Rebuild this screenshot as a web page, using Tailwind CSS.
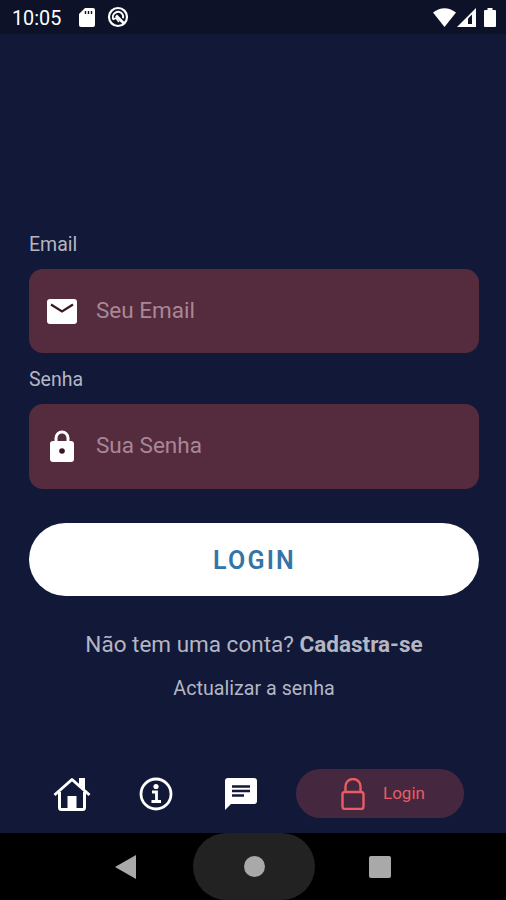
<!DOCTYPE html>
<html lang="pt">
<head>
    <meta charset="UTF-8">
    <meta name="viewport" content="width=device-width, initial-scale=1.0">
    <title>Login</title>
    <script src="https://cdn.jsdelivr.net/npm/@tailwindcss/browser@4"></script>
</head>
<body class="h-[900px] flex flex-col overflow-hidden bg-[#121837] font-[Roboto,sans-serif] text-[#b4b6c4]">

    <!-- Status bar -->
    <header class="h-[34px] shrink-0 flex items-center bg-[#0d1228] pl-3 pr-[10px] text-white">
        <span class="text-[19.8px] leading-none pt-[3px] w-[67px]">10:05</span>
        <svg class="w-4 h-[19px]" viewBox="0 0 16 19" fill="#fff">
            <path d="M6 0h8a2 2 0 0 1 2 2v15a2 2 0 0 1-2 2H2a2 2 0 0 1-2-2V6z"/>
            <path d="M6.500 3v3M9.500 3v3M12.500 3v3" stroke="#0d1228" stroke-width="1.4"/>
        </svg>
        <svg class="w-[22px] h-[22px] ml-3" viewBox="0 0 22 22" fill="none" stroke="#fff">
            <circle cx="11" cy="11" r="9" stroke-width="2.200"/>
            <path d="M6.500 13.500a5.200 5.200 0 0 1 9-5.200 5.200 5.200 0 0 1 .5 4" stroke-width="2"/>
            <path d="M9 9.500l8 8" stroke-width="2.600"/>
            <path d="M6 13.500l3-1.500 3 4" stroke-width="1.500"/>
        </svg>
        <svg class="w-[23px] h-[19px] ml-auto" viewBox="0 0 23 19" fill="#fff">
            <path d="M0 4.500Q11.500-4 23 4.500L11.500 19z"/>
        </svg>
        <svg class="w-[19px] h-[19px] ml-px" viewBox="0 0 19 19">
            <path d="M19 0v19H0z" fill="#fff"/>
            <path d="M11 10.500L15 6.500V16h-4z" fill="#0d1228"/>
        </svg>
        <svg class="w-3 h-[19px] ml-2" viewBox="0 0 12 19" fill="#fff">
            <path d="M3.500 0h5v2H11a1 1 0 0 1 1 1v15a1 1 0 0 1-1 1H1a1 1 0 0 1-1-1V3a1 1 0 0 1 1-1h2.500z"/>
        </svg>
    </header>

    <!-- Login form -->
    <main class="flex-1 flex flex-col pt-[197px] pl-[29px] pr-[27px]">
        <label class="h-7 leading-7 text-[19.5px]">Email</label>
        <div class="h-[84px] mt-[10px] flex items-center rounded-[14px] bg-[#552c3d] pl-[18px] text-[22.5px] text-[#a98796]">
            <svg class="w-[30px] h-[25px] mr-[19px]" viewBox="0 0 30 25">
                <rect width="30" height="25" rx="3" fill="#fff"/>
                <path d="M4 5.500l11 7 11-7" fill="none" stroke="#3a1524" stroke-width="2.200"/>
            </svg>
            <span>Seu Email</span>
        </div>

        <label class="h-7 mt-[13px] leading-7 text-[19.5px]">Senha</label>
        <div class="h-[85px] mt-[10px] flex items-center rounded-[14px] bg-[#552c3d] pl-5 text-[22.5px] text-[#a98796]">
            <svg class="w-[26px] h-8 mr-[21px] mb-[2px]" viewBox="0 0 26 32">
                <path d="M7 13V8a6 6 0 0 1 12 0v5" fill="none" stroke="#fff" stroke-width="3"/>
                <rect x="1" y="11" width="24" height="21" rx="3" fill="#fff"/>
                <circle cx="13" cy="21" r="2.800" fill="#3a1524"/>
            </svg>
            <span class="mb-px">Sua Senha</span>
        </div>

        <button class="h-[73px] mt-[34px] pt-0.5 pl-px rounded-full bg-white text-[25px] font-semibold tracking-[2.2px] text-[#3474a8]">LOGIN</button>

        <p class="mt-[34px] h-7 leading-7 text-center text-[22.5px] whitespace-nowrap">Não tem uma conta? <b>Cadastra-se</b></p>
        <p class="mt-[17px] h-7 leading-7 text-center text-[19.700px]">Actualizar a senha</p>
    </main>

    <!-- Tab bar -->
    <nav class="h-[79px] shrink-0 flex items-center pl-[53px] pr-[42px]">
        <svg class="w-[38px] h-[34px]" viewBox="0 0 38 34" fill="none" stroke="#fff" stroke-width="3">
            <path d="M1.500 18L19 2.500 36.500 18" stroke-linejoin="round"/>
            <path d="M6.500 15v15.500a2 2 0 0 0 2 2h21a2 2 0 0 0 2-2V15"/>
            <path d="M27.500 9V2.500h3V12"/>
            <path d="M14.500 19h9v13h-9z" fill="#fff" stroke="none"/>
        </svg>
        <svg class="w-[34px] h-[34px] ml-12" viewBox="0 0 34 34" fill="none" stroke="#fff">
            <circle cx="17" cy="17" r="15" stroke-width="2.800"/>
            <circle cx="17" cy="9.500" r="2.600" fill="#fff" stroke="none"/>
            <path d="M13 15h4.500v9.500M12.500 24.500h9.500" stroke-width="2.800"/>
        </svg>
        <svg class="w-8 h-8 ml-[52px]" viewBox="0 0 32 32">
            <path d="M3 0h26a3 3 0 0 1 3 3v20a3 3 0 0 1-3 3H6l-6 6V3a3 3 0 0 1 3-3z" fill="#fff"/>
            <path d="M7 8.500h18M7 13h18M7 17.500h12" stroke="#131936" stroke-width="2.500"/>
        </svg>
        <a class="w-[168px] h-[49px] ml-auto flex items-center rounded-full bg-[#452840] pl-[45px] text-[17px] text-[#e85d63]">
            <svg class="w-6 h-8 mr-[18px]" viewBox="0 0 24 32" fill="none" stroke="#e85d63" stroke-width="2.400">
                <rect x="1.500" y="14" width="21" height="17" rx="2.500"/>
                <path d="M4.500 14V8.500a7.500 7.500 0 0 1 15 0V14"/>
            </svg>
            <span>Login</span>
        </a>
    </nav>

    <!-- Android navigation -->
    <footer class="h-[67px] shrink-0 flex items-center bg-black">
        <svg class="w-[21px] h-6 ml-[115px]" viewBox="0 0 21 24" fill="#a9a9a9"><path d="M0 12L21 0v24z"/></svg>
        <div class="w-[122px] h-[67px] ml-[57px] flex items-center justify-center rounded-full bg-[#222]">
            <div class="w-[21px] h-[21px] rounded-full bg-[#a9a9a9]"></div>
        </div>
        <div class="w-[22px] h-[22px] ml-[54px] rounded-[2px] bg-[#a9a9a9]"></div>
    </footer>

</body>
</html>
